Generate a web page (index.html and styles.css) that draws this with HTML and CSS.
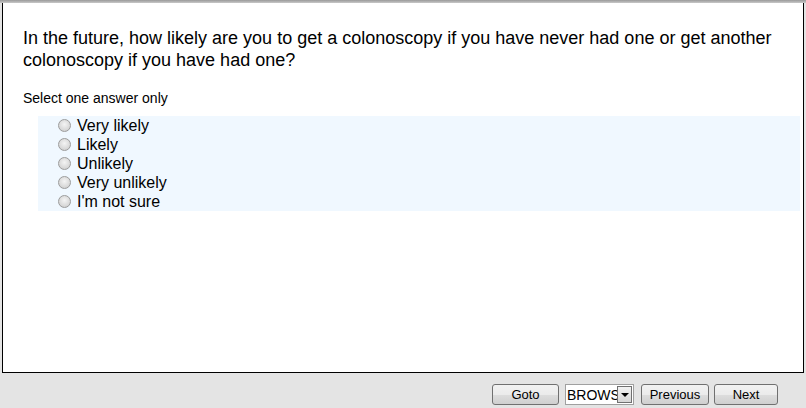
FILE: index.html
```html
<!DOCTYPE html>
<html lang="en">
<head>
    <meta charset="UTF-8">
    <title>Survey - Colonoscopy</title>
    <link rel="stylesheet" href="styles.css">
</head>
<body>
    <div class="topbar"></div>
    <div class="panel">
        <h2 class="question">In the future, how likely are you to get a colonoscopy if you have never had one or get another colonoscopy if you have had one?</h2>
        <p class="hint">Select one answer only</p>
        <div class="options">
            <label class="option"><input type="radio" name="q1"> Very likely</label>
            <label class="option"><input type="radio" name="q1"> Likely</label>
            <label class="option"><input type="radio" name="q1"> Unlikely</label>
            <label class="option"><input type="radio" name="q1"> Very unlikely</label>
            <label class="option"><input type="radio" name="q1"> I'm not sure</label>
        </div>
    </div>
    <div class="navbar">
        <button class="btn btn-goto">Goto</button>
        <div class="select">
            <span class="select-text">BROWSE</span>
            <span class="select-arrow"></span>
        </div>
        <button class="btn btn-prev">Previous</button>
        <button class="btn btn-next">Next</button>
    </div>
</body>
</html>
```

FILE: styles.css
```css
body {
    margin: 0;
    padding: 0;
    background-color: #e4e4e4;
    font-family: Arial, "Liberation Sans", sans-serif;
    color: #000;
}
.topbar {
    height: 3px;
    background: linear-gradient(#9a9a9a, #c8c8c8);
}
.panel {
    margin: 0 2px;
    height: 368px;
    background: #fff;
    border: 1px solid #000;
    border-top: none;
    box-sizing: content-box;
    padding-top: 1px;
}
.question {
    margin: 23px 20px 0 20px;
    font-size: 18px;
    font-weight: normal;
    line-height: 22px;
}
.hint {
    margin: 19px 0 0 20px;
    font-size: 14px;
    line-height: 16px;
}
.options {
    margin: 10px 3px 0 35px;
    background: #f0f8ff;
    padding: 0;
}
.option {
    display: flex;
    align-items: center;
    height: 19px;
    font-size: 16px;
    padding-left: 19px;
}
.option input {
    -webkit-appearance: none;
    appearance: none;
    width: 13px;
    height: 13px;
    margin: 0 6px 0 1px;
    border-radius: 50%;
    border: 1px solid #9c9c9c;
    background: radial-gradient(circle at 50% 40%, #f4f4f4 0%, #dadada 60%, #c8c8c8 100%);
    box-sizing: border-box;
}
.navbar {
    display: flex;
    justify-content: flex-end;
    align-items: center;
    padding: 11px 28px 0 0;
}
.btn {
    height: 21px;
    font-family: Arial, "Liberation Sans", sans-serif;
    font-size: 13px;
    color: #000;
    border: 1px solid #707070;
    border-radius: 3px;
    background: linear-gradient(#f2f2f2 0%, #ebebeb 50%, #dddddd 51%, #cfcfcf 100%);
    padding: 0;
    cursor: pointer;
}
.btn-goto {
    width: 67px;
}
.btn-prev {
    width: 68px;
    margin-left: 7px;
}
.btn-next {
    width: 64px;
    margin-left: 5px;
}
.select {
    display: flex;
    align-items: center;
    width: 69px;
    height: 21px;
    margin-left: 6px;
    background: #fff;
    border: 1px solid #a0a0a0;
    box-sizing: border-box;
    font-size: 14px;
    overflow: hidden;
}
.select-text {
    width: 51px;
    padding-left: 1px;
    overflow: hidden;
    white-space: nowrap;
}
.select-arrow {
    position: relative;
    width: 15px;
    height: 17px;
    margin-left: auto;
    margin-right: 1px;
    border: 1px solid #707070;
    background: linear-gradient(#f2f2f2, #d6d6d6);
    box-sizing: border-box;
}
.select-arrow::after {
    content: "";
    position: absolute;
    left: 3px;
    top: 6px;
    border-left: 4px solid transparent;
    border-right: 4px solid transparent;
    border-top: 4px solid #000;
}
```
